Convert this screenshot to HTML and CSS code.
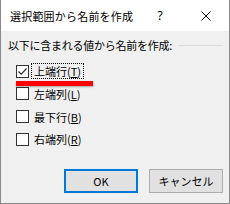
FILE: index.html
```html
<!DOCTYPE html>
<html lang="ja">
<head>
    <meta charset="UTF-8">
    <title>選択範囲から名前を作成</title>
    <link rel="stylesheet" href="styles.css">
</head>
<body>
    <div class="dialog">
        <div class="titlebar">
            <span class="title">選択範囲から名前を作成</span>
            <span class="help">?</span>
            <span class="close">
                <svg width="10" height="10" viewBox="0 0 10 10"><path d="M0.5 0.5L9.5 9.5M9.5 0.5L0.5 9.5" stroke="#000" stroke-width="1" fill="none"/></svg>
            </span>
        </div>

        <div class="content">
            <div class="group-head">
                <span>以下に含まれる値から名前を作成:</span>
                <span class="rule"></span>
            </div>

            <div class="options">
                <div class="option">
                    <span class="box checked">
                        <svg width="11" height="11" viewBox="0 0 11 11"><path d="M1.5 5.5L4.2 8.2L9.5 2.5" stroke="#333" stroke-width="1.2" fill="none"/></svg>
                    </span>
                    <span class="label focused">上端行(<u>T</u>)</span>
                </div>
                <div class="option">
                    <span class="box"></span>
                    <span class="label">左端列(<u>L</u>)</span>
                </div>
                <div class="option">
                    <span class="box"></span>
                    <span class="label">最下行(<u>B</u>)</span>
                </div>
                <div class="option">
                    <span class="box"></span>
                    <span class="label">右端列(<u>R</u>)</span>
                </div>
            </div>

            <div class="buttons">
                <button class="btn default">OK</button>
                <button class="btn">キャンセル</button>
            </div>
        </div>

        <!-- red marker drawn over the first option -->
        <div class="marker"></div>
    </div>
</body>
</html>
```

FILE: styles.css
```css
* {
    box-sizing: border-box;
    margin: 0;
    padding: 0;
}

body {
    font-family: "Noto Sans CJK JP", "Noto Sans", sans-serif;
    font-size: 11px;
    color: #000;
    background: #f0f0f0;
}

.dialog {
    position: relative;
    width: 230px;
    height: 204px;
    background: #f0f0f0;
    border: 1px solid #8a8a8a;
    border-top: none;
}

.titlebar {
    display: flex;
    align-items: center;
    height: 31px;
    background: #fff;
}

.title {
    flex: 1;
    padding-left: 9px;
    font-size: 11px;
    letter-spacing: 0.2px;
    line-height: 14px;
}

.help,
.close {
    width: 46px;
    height: 31px;
    display: flex;
    align-items: center;
    justify-content: center;
}

.help {
    font-family: "Noto Sans", sans-serif;
    font-size: 12px;
}

.group-head {
    display: flex;
    align-items: center;
    margin-top: 8px;
    padding: 0 6px 0 7px;
    height: 12px;
    line-height: 12px;
    letter-spacing: -0.25px;
}

.rule {
    flex: 1;
    height: 1px;
    margin-left: 6px;
    background: #dcdcdc;
}

.options {
    margin: 9px 0 0 15px;
}

.option {
    display: flex;
    align-items: center;
    height: 22.67px;
}

.box {
    width: 13px;
    height: 13px;
    border: 1px solid #333;
    background: #fff;
    display: flex;
    align-items: center;
    justify-content: center;
}

.label {
    margin-left: 2px;
    padding: 0 2px;
    line-height: 14px;
    border: 1px solid transparent;
}

.label.focused {
    border: 1px dotted #000;
}

.buttons {
    display: flex;
    justify-content: flex-end;
    gap: 11px;
    margin-top: 18px;
    padding-right: 6px;
}

.btn {
    width: 74px;
    height: 24px;
    font-family: "Noto Sans CJK JP", "Noto Sans", sans-serif;
    font-size: 11px;
    color: #000;
    background: #e1e1e1;
    border: 1px solid #adadad;
}

.btn.default {
    border: 2px solid #0078d7;
}

.marker {
    position: absolute;
    left: 15px;
    top: 81px;
    width: 77px;
    height: 5px;
    background: #ff0000;
    box-shadow: 0 1px 2px rgba(0, 0, 0, 0.3);
}
```
